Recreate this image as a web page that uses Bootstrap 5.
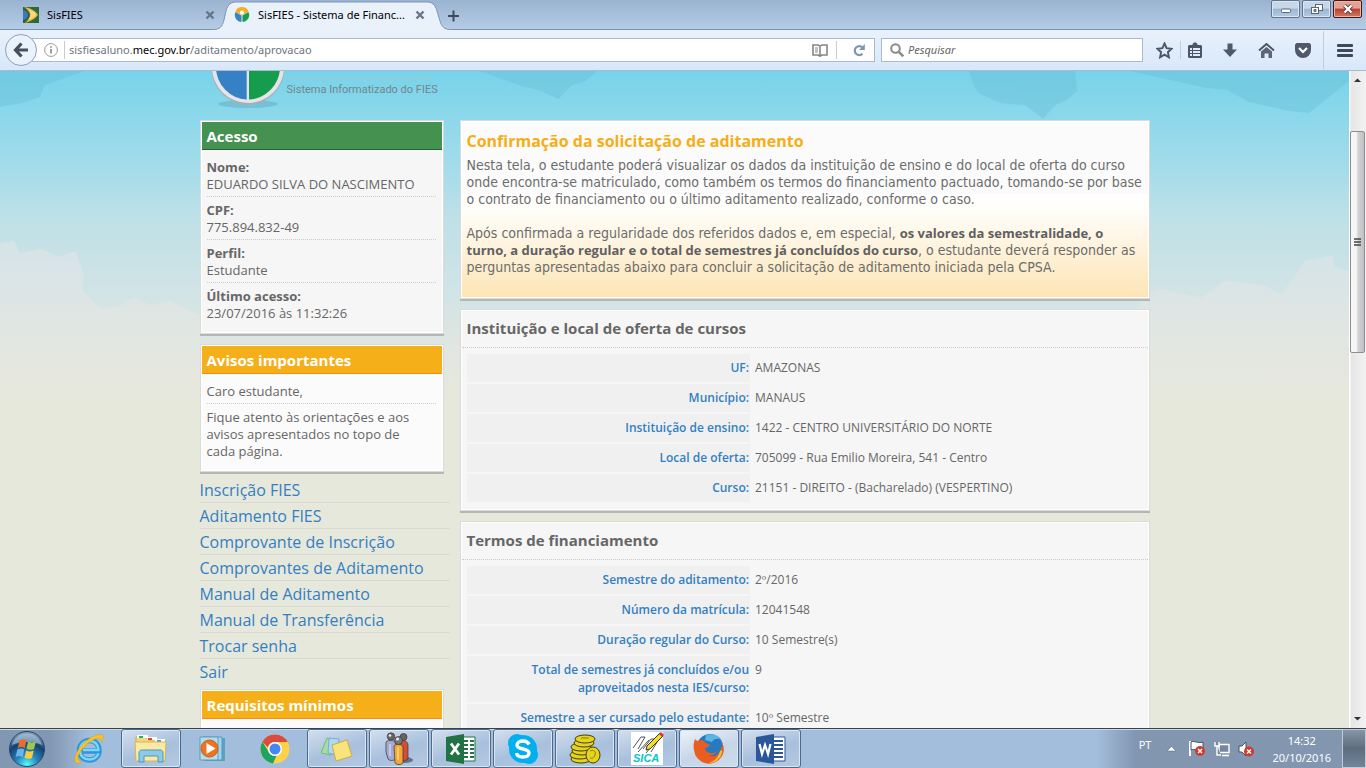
<!DOCTYPE html>
<html lang="pt-BR">
<head>
<meta charset="utf-8">
<meta name="viewport" content="width=device-width, initial-scale=1">
<title>SisFIES - Sistema de Financiamento</title>
<link href="https://cdn.jsdelivr.net/npm/bootstrap@5.3.0/dist/css/bootstrap.min.css" rel="stylesheet">
<script src="https://cdn.jsdelivr.net/npm/bootstrap@5.3.0/dist/js/bootstrap.bundle.min.js" defer></script>
<style>
body{font-family:"Open Sans","Noto Sans",sans-serif;font-size:13px;line-height:17px;color:#666;background:#e7e8dc}
button{border:0;background:none;padding:0;display:flex;align-items:center;justify-content:center}
svg{display:block;flex-shrink:0}
a{text-decoration:none}
/* browser frame */
.chrome-ui{font-family:"Noto Sans","Open Sans",sans-serif;font-size:11px;line-height:16px;color:#000}
.tabstrip{height:30px;background:linear-gradient(#9ab3d0,#b5cce6);border-bottom:1px solid #7b93b1}
.tab-item{height:30px;margin-bottom:-1px}
.tab-first{width:222px;padding:0 7px 0 23px}
.tab-active{width:218px;padding:0 15px 0 12px;position:relative}
.tab-shape{position:absolute;left:-9px;top:1px}
.tab-active>:not(.tab-shape){position:relative}
.win-controls{gap:2px}
.winbtn{width:29px;height:18px;border:1px solid #5f738c;border-radius:2px;background:linear-gradient(#c6d7ea 45%,#9db5d0 50%,#b4cae2);box-shadow:inset 0 0 0 1px #d9e6f3}
.winbtn-close{border-color:#4b1418;background:linear-gradient(#e2a296 45%,#b93d31 50%,#d27a63);box-shadow:inset 0 0 0 1px #e8b5a9}
.toolbar-ui{height:41px;padding-left:5px;background:linear-gradient(#e9f1fb,#d8e8f9);border-bottom:1px solid #a9bbd2}
.field-ui{height:24px;background:#fff;border:1px solid #a9bbd3}
.field-ui input{border:0;outline:0;background:none;font-size:11px;min-width:0}
.back-btn{width:32px;height:32px;border:1px solid #8aa0bf;border-radius:50%;background:#eaf2fb;margin-right:-5px;z-index:1}
.vline{width:1px;height:18px;background:#c6ccd4}
.vline-tall{height:38px;margin:0 13px 0 12px}
.site-info{gap:6px}
.search-ui{width:262px;margin-left:6px}
.search-ui input::placeholder{color:#666;font-style:italic}
.tool-icons{padding:0 13px 0 13px}
.tool-set{gap:20px}
.star-set{gap:7px}
/* page */
.page-area{position:relative;overflow:hidden;background:#e7e8dc}
.sky{position:absolute;inset:0 0 auto 0;width:100%;height:330px}
.page-wrap{max-width:950px;position:relative}
.logo-row{height:49px}
.logo-text{width:144px;border-top:1px solid #a5c5cc;font:11px/20px Roboto,"Liberation Sans",sans-serif;color:#74848b;white-space:nowrap}
.page-cols{gap:10px}
.col-side{width:250px;flex-shrink:0}
.panel{border:1px solid #dadcda;padding:1px;background:#f6f6f6;background-clip:padding-box;box-shadow:inset 0 0 0 1px #fff,0 2px #b5b7b2;margin-bottom:10px}
.panel-side{margin-right:6px}
.panel-light{background-color:#fbfbfb}
.panel-head{height:28px;padding:1px 5px 0;font-size:15px;font-weight:700;line-height:26px;color:#fff;background:#449150;border-bottom:1px solid #286234;margin:0}
.panel-head-warn{background:#f5af19;border-color:#f98a17}
.facts{padding:9px 6px 10px 5px;margin:0}
.facts>div+div{border-top:1px dotted #ccc;margin-top:3px;padding-top:5px}
.facts dd{margin:0}
.side-menu{margin:-5px 0 4px}
.side-menu a{display:block;height:26px;font-size:16px;line-height:27px;color:#337fc1;border-bottom:1px solid #d9dad5}
.side-menu a:last-child{border-color:transparent}
.intro{padding:8px 6px 21px 5px;background:linear-gradient(#fbfbfb 72px,#fff 72px,#fffdf8 90px,#fde5b6)}
.intro h1{font-size:16px;line-height:22px;font-weight:700;color:#f6ae17;margin:0 0 5px}
.intro p{font-family:"DejaVu Sans Condensed","Open Sans",sans-serif;font-size:14px;line-height:17px;margin:0 -6px 17px 0;color:#6c6c6c}
.intro p:last-child{margin-bottom:0}
.intro b{font-family:"Open Sans",sans-serif;font-size:13px;line-height:16px;color:#606060}
.sec-title{font-size:15px;font-weight:700;line-height:34px;height:37px;margin:0;padding:0 5px;border-bottom:1px dotted #ccc}
.data-table{width:calc(100% - 11px);margin:4px 6px 5px 5px;border-collapse:separate;border-spacing:0 2px;font-size:12px;line-height:18px}
.data-table th{width:42%;background:#f0f0f0;color:#337fc1;font-weight:600;text-align:right;padding:5px 1px 5px 20px;vertical-align:top}
.data-table td{padding:5px;vertical-align:top}
/* scrollbar */
.scroll-ui{width:17px;background:linear-gradient(90deg,#fff 1px,#e6e6e6 2px,#f2f2f2);padding:5px 1px}
.thumb-ui{width:15px;height:222px;margin-top:47px;border:1px solid #8e8e8e;border-radius:2px;background:linear-gradient(90deg,#f6f6f6 40%,#d2d2d4 55%,#bfc0c4)}
/* taskbar */
.taskbar{height:40px;border-top:1px solid #33434f;background:linear-gradient(90deg,#8297b1 50px,#a3bedd 90px,#a3bedd calc(100% - 270px),#8296b0 calc(100% - 230px));box-shadow:inset 0 1px #cbd9e8}
.task-list{gap:2px;margin-left:-3px}
.task-btn{width:60px;height:39px;border-radius:3px}
.task-open{border:1px solid #4f6a8c;box-shadow:inset 0 0 0 1px #dbe6f2;background:linear-gradient(160deg,#d3dfed,#a8c0dd 55%,#b4c9e2)}
.task-focus{background:linear-gradient(160deg,#eef3f8,#c6d6e8 55%,#cedbea)}
.tray{color:#fff;font-size:11px;line-height:17px}
.tray-clock{margin:0 11px 0 17px}
.show-desk{width:24px;height:39px;border:1px solid #c0cbd8;background:linear-gradient(#8795a6,#5d6c7e 50%,#74849a)}
</style>
</head>
<body class="vh-100 overflow-hidden d-flex flex-column">

<header class="chrome-ui flex-shrink-0">
  <div class="tabstrip d-flex">
    <div class="tab-item tab-first d-flex align-items-center">
      <svg width="16" height="16" viewBox="0 0 16 16"><rect width="16" height="16" fill="#2a6b3c"/><path d="M0 1 6 8 0 15z" fill="#1d4f86"/><path d="M0 3c4 1 5 4 5 5s-1 4-5 5z" fill="#3d7ab6"/><path d="M1 0c7 1 12 4 14 8-3 4-7 6-13 8 3-3 5-5 5-8S4 2 1 0z" fill="#eeb433"/><path d="M5 2c5 2 8 4 8 6-2 3-5 4-8 5 3-3 4-8 0-11z" fill="#fbdc84"/></svg>
      <span class="ms-2 flex-grow-1">SisFIES</span>
      <button aria-label="Fechar aba"><svg width="10" height="10" viewBox="0 0 10 10" stroke="#66758a" stroke-width="2.4"><path d="M1.500 1.500l7 7M8.500 1.500l-7 7"/></svg></button>
    </div>
    <div class="tab-item tab-active d-flex align-items-center">
      <svg class="tab-shape" width="238" height="30" viewBox="0 0 238 30"><path d="M0 28.500C7 28.500 9 26 11 19L13 10C15 3 18 1 24 1H213c6 0 9 2 11 9l3 10c2 6 4 8.500 11 8.500V30H0z" fill="#e9f1fb"/><path d="M0 28.500C7 28.500 9 26 11 19L13 10C15 3 18 1 24 1H213c6 0 9 2 11 9l3 10c2 6 4 8.500 11 8.500" fill="none" stroke="#7f97b5"/></svg>
      <svg width="16" height="16" viewBox="0 0 16 16"><circle cx="8" cy="8" r="7.500" fill="#e4e8ee"/><path d="M8 8 1.500 4.500a7 7 0 0 1 13 0z" fill="#f8ad1c"/><path d="M7.500 8.500v6.300A6.700 6.700 0 0 1 1.600 5z" fill="#3b83c6"/><path d="M8.500 8.500v6.300A6.700 6.700 0 0 0 14.400 5z" fill="#16a04c"/><circle cx="8" cy="5.500" r="2" fill="#fff"/></svg>
      <span class="flex-grow-1 ps-1 ms-1 text-nowrap">SisFIES - Sistema de Financ...</span>
      <button aria-label="Fechar aba"><svg width="10" height="10" viewBox="0 0 10 10" stroke="#66758a" stroke-width="2.4"><path d="M1.500 1.500l7 7M8.500 1.500l-7 7"/></svg></button>
    </div>
    <button class="ms-2" aria-label="Nova aba"><svg width="11" height="30" viewBox="0 0 11 30" stroke="#3f4b5a" stroke-width="2"><path d="M0 16h11M5.500 10.500v11"/></svg></button>
    <div class="win-controls ms-auto d-flex" >
      <button class="winbtn mt-0" aria-label="Minimizar"><svg width="12" height="12" viewBox="0 0 12 12"><rect x="1.500" y="6" width="9" height="3.500" rx="1" fill="#fff" stroke="#59687b"/></svg></button>
      <button class="winbtn" aria-label="Restaurar"><svg width="12" height="12" viewBox="0 0 12 12" fill="#fff" stroke="#59687b"><rect x="4.500" y="1.500" width="7" height="6"/><rect x=".5" y="4.500" width="7" height="6"/><path d="M3 6.500h2v2H3z" fill="#8fa8c4"/></svg></button>
      <button class="winbtn winbtn-close me-1" aria-label="Fechar"><svg width="12" height="10" viewBox="0 0 12 10"><path d="M2.500 1.500l7 7M9.500 1.500l-7 7" stroke="#5a3a40" stroke-width="4"/><path d="M2.500 1.500l7 7M9.500 1.500l-7 7" stroke="#fff" stroke-width="2.300"/></svg></button>
    </div>
  </div>
  <div class="toolbar-ui d-flex align-items-center">
    <button class="back-btn" aria-label="Voltar"><svg width="16" height="16" viewBox="0 0 16 16" fill="none" stroke="#454f60" stroke-width="3.200"><path d="M8.500 1.500 2.500 8l6 6.500M3 8h12"/></svg></button>
    <div class="field-ui flex-grow-1 d-flex align-items-center ps-2 border-start-0">
      <div class="site-info d-flex align-items-center ms-1 me-1">
        <svg width="14" height="14" viewBox="0 0 14 14"><circle cx="7" cy="7" r="6.400" fill="none" stroke="#999"/><path d="M6.200 6h1.600v4.500H6.200zM6.200 3.300h1.600v1.500H6.200z" fill="#888"/></svg>
        <span class="vline"></span>
      </div>
      <a class="text-nowrap text-secondary flex-grow-1" href="#">sisfiesaluno.<span class="text-black">mec.gov.br</span>/aditamento/aprovacao</a>
      <button aria-label="Modo de leitura"><svg width="16" height="13" viewBox="0 0 16 13" fill="none" stroke="#858585" stroke-width="1.600"><path d="M1 1h5l2 1 2-1h5v10h-5l-2 1.200L6 11H1zM8 2v9"/><path d="M3 4h3M3 6h3M3 8h3" stroke-width="1"/></svg></button>
      <span class="vline mx-2"></span>
      <button class="mx-2" aria-label="Recarregar"><svg width="13" height="13" viewBox="0 0 13 13"><path d="M9.500 9.800A4.500 4.500 0 1 1 9.500 3.500" fill="none" stroke="#7e95b4" stroke-width="2.200"/><path d="M11.800 0v6H6z" fill="#7e95b4"/></svg></button>
    </div>
    <label class="search-ui field-ui d-flex align-items-center ps-1">
      <svg class="ms-1" width="14" height="14" viewBox="0 0 14 14" fill="none" stroke="#8b8b8b" stroke-width="2"><circle cx="5.500" cy="5.500" r="4.300"/><path d="M8.800 8.800l4.500 4.500" stroke-width="2.600"/></svg>
      <input class="flex-grow-1 px-1" type="text" placeholder="Pesquisar" aria-label="Pesquisar">
    </label>
    <div class="tool-icons d-flex align-items-center">
      <div class="tool-set d-flex align-items-center">
        <div class="star-set d-flex align-items-center">
          <button aria-label="Favoritar"><svg width="17" height="17" viewBox="0 0 17 17"><path d="M8.500 1.500l2.100 4.700 5 .6-3.700 3.400 1 5.100-4.400-2.600-4.400 2.600 1-5.100L1.400 6.800l5-.6z" fill="none" stroke="#4a5565" stroke-width="1.900"/></svg></button>
          <span class="vline"></span>
          <button aria-label="Favoritos"><svg width="14" height="16" viewBox="0 0 14 16"><path d="M1 3h3.500V2L6 .5h2L9.500 2v1H13l1 1v11l-1 1H1l-1-1V4z" fill="#4a5565"/><path d="M2 6h2v2H2zm3 0h7v2H5zM2 9h2v2H2zm3 0h7v2H5zM2 12h2v2H2zm3 0h7v2H5z" fill="#e2ecf8"/></svg></button>
        </div>
        <button aria-label="Downloads"><svg width="16" height="15" viewBox="0 0 16 15"><path d="M5.500.5h5v6H15L8 14 1 6.500h4.500z" fill="#4f596a"/></svg></button>
        <button aria-label="Início"><svg width="17" height="15" viewBox="0 0 17 15"><path d="M1 7.500 8.500 1 16 7.500" fill="none" stroke="#4a5565" stroke-width="2"/><path d="M3 8.500 8.500 4l5.500 4.500V15h-3.500v-4.500h-4V15H3z" fill="#5b6577"/></svg></button>
        <button aria-label="Pocket"><svg width="16" height="15" viewBox="0 0 16 15"><path d="M1.500 0h13L16 1.500V7a8 8 0 0 1-16 0V1.500z" fill="#4f596a"/><path d="M4 5l4 4 4-4" fill="none" stroke="#fff" stroke-width="2.200"/></svg></button>
      </div>
      <span class="vline vline-tall"></span>
      <button aria-label="Menu"><svg width="16" height="13" viewBox="0 0 16 13" fill="#3f4957"><rect width="16" height="3" rx="1"/><rect y="5" width="16" height="3" rx="1"/><rect y="10" width="16" height="3" rx="1"/></svg></button>
    </div>
  </div>
</header>

<div class="d-flex flex-grow-1 overflow-hidden">
  <main class="page-area flex-grow-1">
    <svg class="sky" viewBox="0 0 1350 330" preserveAspectRatio="none" aria-hidden="true">
      <defs>
        <linearGradient id="skyfill" x2="0" y2="1"><stop offset="0" stop-color="#78d3ea"/><stop offset=".08" stop-color="#83d6eb"/><stop offset=".3" stop-color="#a5dcea"/><stop offset=".45" stop-color="#bfe0e7"/><stop offset=".65" stop-color="#cfe3e6"/><stop offset=".85" stop-color="#e2e6e1"/><stop offset="1" stop-color="#e7e8dc"/></linearGradient>
        <linearGradient id="cloudfill" x2="0" y2="1"><stop offset="0" stop-color="#d8e4e8"/><stop offset=".5" stop-color="#e1e6e3"/><stop offset="1" stop-color="#e7e8dc"/></linearGradient>
      </defs>
      <rect width="1350" height="330" fill="url(#skyfill)"/>
      <g fill="#66bfd6" opacity=".4">
        <path d="M0 0h85L45 14 40 26 22 32 0 36z"/><path d="M480 0h118l-12 10-15 5-12 13-18-8-22-6z"/><path d="M970 0h106l2 20-12 10-10 4-12 14-18-14-25-2-22-10-5-8z"/><path d="M1130 0h220v10l-40 32-20-2-40-9-22-12-20-2z"/>
      </g>
      <path d="M0 172l14-2 6 12 22-4 16 8 18-6 8 24-2 14 18 20 18-2 16-10 16 8 20-4 30 14v86H0z" fill="url(#cloudfill)" opacity=".85"/>
      <path d="M1140 224l22-6 40 9 24-18 40 6 16 8 14-18 10-15 28-6 1 12 15 4v130H1140z" fill="url(#cloudfill)" opacity=".85"/>
    </svg>
    <div class="page-wrap mx-auto">
      <div class="logo-row d-flex ps-2">
        <svg width="79" height="40" viewBox="0 0 79 40" aria-label="SisFIES"><ellipse cx="40" cy="33" rx="30" ry="4" fill="#6aafc2" opacity=".55"/><circle cx="40" cy="-3" r="36.500" fill="#a9adb3"/><circle cx="40" cy="-4" r="36" fill="#e3e5ea"/><path d="M38.700 28.500A32.500 32.500 0 0 1 8-3h30.700z" fill="#3681c6"/><path d="M41 28.500A32.500 32.500 0 0 0 72-3H41z" fill="#159c4d"/></svg>
        <div class="pt-2"><div class="logo-text">Sistema Informatizado do FIES</div></div>
      </div>
      <div class="page-cols d-flex">
        <aside class="col-side">
          <section class="panel panel-side">
            <h2 class="panel-head">Acesso</h2>
            <dl class="facts">
              <div><dt>Nome:</dt><dd>EDUARDO SILVA DO NASCIMENTO</dd></div>
              <div><dt>CPF:</dt><dd>775.894.832-49</dd></div>
              <div><dt>Perfil:</dt><dd>Estudante</dd></div>
              <div><dt>Último acesso:</dt><dd>23/07/2016 às 11:32:26</dd></div>
            </dl>
          </section>
          <section class="panel panel-side panel-light">
            <h2 class="panel-head panel-head-warn">Avisos importantes</h2>
            <div class="facts">
              <div>Caro estudante,</div>
              <div>Fique atento às orientações e aos<br>avisos apresentados no topo de<br>cada página.</div>
            </div>
          </section>
          <nav class="side-menu">
            <a href="#">Inscrição FIES</a><a href="#">Aditamento FIES</a><a href="#">Comprovante de Inscrição</a><a href="#">Comprovantes de Aditamento</a><a href="#">Manual de Aditamento</a><a href="#">Manual de Transferência</a><a href="#">Trocar senha</a><a href="#">Sair</a>
          </nav>
          <section class="panel panel-side panel-light">
            <h2 class="panel-head panel-head-warn">Requisitos mínimos</h2>
            <div class="facts"><div>&nbsp;</div></div>
          </section>
        </aside>
        <div class="flex-grow-1">
          <section class="panel"><div class="intro">
            <h1>Confirmação da solicitação de aditamento</h1>
            <p>Nesta tela, o estudante poderá visualizar os dados da instituição de ensino e do local de oferta do curso<br>onde encontra-se matriculado, como também os termos do financiamento pactuado, tomando-se por base<br>o contrato de financiamento ou o último aditamento realizado, conforme o caso.</p>
            <p>Após confirmada a regularidade dos referidos dados e, em especial, <b>os valores da semestralidade, o<br>turno, a duração regular e o total de semestres já concluídos do curso</b>, o estudante deverá responder as<br>perguntas apresentadas abaixo para concluir a solicitação de aditamento iniciada pela CPSA.</p>
          </div></section>
          <section class="panel">
            <h2 class="sec-title">Instituição e local de oferta de cursos</h2>
            <table class="data-table">
              <tr><th scope="row">UF:</th><td>AMAZONAS</td></tr>
              <tr><th scope="row">Município:</th><td>MANAUS</td></tr>
              <tr><th scope="row">Instituição de ensino:</th><td>1422 - CENTRO UNIVERSITÁRIO DO NORTE</td></tr>
              <tr><th scope="row">Local de oferta:</th><td>705099 - Rua Emilio Moreira, 541 - Centro</td></tr>
              <tr><th scope="row">Curso:</th><td>21151 - DIREITO - (Bacharelado) (VESPERTINO)</td></tr>
            </table>
          </section>
          <section class="panel">
            <h2 class="sec-title">Termos de financiamento</h2>
            <table class="data-table">
              <tr><th scope="row">Semestre do aditamento:</th><td>2º/2016</td></tr>
              <tr><th scope="row">Número da matrícula:</th><td>12041548</td></tr>
              <tr><th scope="row">Duração regular do Curso:</th><td>10 Semestre(s)</td></tr>
              <tr><th scope="row">Total de semestres já concluídos e/ou<br>aproveitados nesta IES/curso:</th><td>9</td></tr>
              <tr><th scope="row">Semestre a ser cursado pelo estudante:</th><td>10º Semestre</td></tr>
            </table>
          </section>
        </div>
      </div>
    </div>
  </main>
  <div class="scroll-ui flex-shrink-0 d-flex flex-column align-items-center" aria-hidden="true">
    <svg width="7" height="8" viewBox="0 0 7 8"><path d="M0 6h7L3.500 2.500z" fill="#333"/></svg>
    <div class="thumb-ui d-flex align-items-center justify-content-center"><svg width="7" height="9" viewBox="0 0 7 9"><path d="M0 1h7M0 4h7M0 7h7" stroke="#444" stroke-width="1.500"/></svg></div>
    <svg class="mt-auto" width="7" height="8" viewBox="0 0 7 8"><path d="M0 2h7L3.500 5.500z" fill="#333"/></svg>
  </div>
</div>

<footer class="taskbar chrome-ui d-flex align-items-center flex-shrink-0">
  <div class="task-list d-flex">
    <button class="task-btn" aria-label="Iniciar"><svg width="38" height="38" viewBox="0 0 38 38"><defs><radialGradient id="orbfill" cx=".5" cy=".95" r=".9"><stop offset="0" stop-color="#5ff"/><stop offset=".35" stop-color="#2585bd"/><stop offset=".7" stop-color="#15426f"/><stop offset="1" stop-color="#7d9bb9"/></radialGradient></defs><circle cx="19" cy="19" r="17.500" fill="url(#orbfill)" stroke="#26466a"/><path d="M4 15a15.500 15.500 0 0 1 30 0c-8-4-22-4-30 0z" fill="#c3d6e8" opacity=".55"/><path d="M11.500 10.500c3-1.500 5-1.200 7 0l-1.700 7.500c-2.500-1.400-4.500-1.400-7 0z" fill="#ee6a2c"/><path d="M20 11.500c3 1.500 5 1.300 8 0l-2 7.500c-3 1.300-5 1-7.500-.3z" fill="#9bc853"/><path d="M9.300 19.500c3-1.300 5-1.200 7 0L14.700 27c-2.500-1.400-4.500-1.400-7 0z" fill="#69b5ea"/><path d="M18 20.500c3 1.400 5 1.300 7.700 0L24 28c-3 1.300-5 1-7.500-.3z" fill="#fccb41"/></svg></button>
    <button class="task-btn" aria-label="Internet Explorer"><svg width="32" height="32" viewBox="0 0 32 32"><path d="M26 20.500C24 25 20.500 27 16.500 27 10.500 27 6.500 23 6.500 17.500S10.700 7.500 16.500 7.500c6 0 9.500 4 9.500 10.500H9.500" fill="none" stroke="#2a97dd" stroke-width="5.500"/><path d="M25.500 20.500C23.500 25 20.500 26.500 16.500 26.500 11 26.500 7 23 7 17.500S11 8 16.500 8c5 0 8.500 3 9 9H10" fill="none" stroke="#80d4f8" stroke-width="2.500"/><path d="M6 30.500C-2 30 3 17 12 9 20 2 30-1 30 4c.2 2-.7 4-1.500 5.500C28.500 2 19 6 12 13 5 20 2 28 8 28z" fill="#f8c325" stroke="#d89d12" stroke-width=".5"/></svg></button>
    <button class="task-btn task-open" aria-label="Windows Explorer"><svg width="34" height="30" viewBox="0 0 34 30"><path d="M2 3h10l2 3h17v20H2z" fill="#f5d879" stroke="#c9a648"/><path d="M3 1h11v3H3zM13 3h10v3H13zM21 5h10v3H21z" fill="#fff"/><path d="M5 2h4v2H5z" fill="#27b35a"/><path d="M14 4h4v2h-4z" fill="#df4a36"/><path d="M23 6h4v2h-4z" fill="#4698de"/><path d="M1 8h31l-1 19H2z" fill="#fbe9a5" stroke="#d4b65d"/><path d="M5 28V19c0-2 1-3 3-3h18c2 0 3 1 3 3v9h-5v-6H10v6z" fill="#8ccbe6" stroke="#4b98bd"/></svg></button>
    <button class="task-btn" aria-label="Windows Media Player"><svg width="28" height="26" viewBox="0 0 28 26"><path d="M6 2h20v23H6z" fill="#58a2c6"/><path d="M4 1h19v23H4z" fill="#a5d4ea" stroke="#5698ba"/><path d="M1 1h18v23H1z" fill="#b8dbec" stroke="#5c9dbf"/><circle cx="10.500" cy="12.500" r="8.500" fill="#ee7322" stroke="#c85e18"/><path d="M7.500 7v11l9-5.500z" fill="#fff"/></svg></button>
    <button class="task-btn" aria-label="Google Chrome"><svg width="30" height="30" viewBox="0 0 30 30"><circle cx="15" cy="15" r="14.500" fill="#fdd249"/><path d="M2.400 7.800A14.500 14.500 0 0 1 27.800 8H15c-4 0-6.500 2.500-7 5.500z" fill="#dc4b3e"/><path d="M2.400 7.800 9 18.500c1.500 2.500 4 3.500 7.500 3.300L13 29.400A14.500 14.500 0 0 1 2.400 7.800z" fill="#1da462"/><circle cx="15" cy="15" r="7" fill="#fff"/><circle cx="15" cy="15" r="5.500" fill="#4688f1"/></svg></button>
    <button class="task-btn task-open" aria-label="Notas autoadesivas"><svg width="32" height="28" viewBox="0 0 32 28"><path d="M6 3 12 5 10 20 0 18z" fill="#a7dda1" stroke="#75b880"/><path d="M8 3 18 4 17 20 7 18z" fill="#aed9f3" stroke="#7aacd0"/><path d="M11 10 26 5l5 16-16 5z" fill="#f8e37c" stroke="#cfac3c"/></svg></button>
    <button class="task-btn task-open" aria-label="Usuários"><svg width="28" height="34" viewBox="0 0 28 34"><ellipse cx="20" cy="28" rx="8" ry="3" fill="#61718a"/><g stroke="#333" stroke-width=".7"><path d="M14 9c4-2 9 0 9 4v14c-3 2-6 3-9 1z" fill="#d34e37"/><circle cx="18.500" cy="5" r="3.500" fill="#666"/><path d="M1 10c3-3 9-2 10 2v15c-3 2-6 2-8 0L1 20z" fill="#a3aacf"/><circle cx="6" cy="4.500" r="3.700" fill="#666"/><path d="M9 14c3-3 9-2 9 2v15c-2 2-6 2-8 0z" fill="#f4a832"/><circle cx="13.500" cy="8.500" r="4" fill="#777"/></g><circle cx="12.500" cy="7" r="1.500" fill="#eee"/><circle cx="5" cy="3.500" r="1.300" fill="#eee"/><path d="M13 15v13M5 12v12" stroke="#fff" stroke-width="1.500" opacity=".5"/></svg></button>
    <button class="task-btn task-open" aria-label="Excel"><svg width="32" height="32" viewBox="0 0 32 32"><path d="M16 4h14v24H16z" fill="#fff" stroke="#217346"/><path d="M19 8h4m2 0h4M19 12h4m2 0h4M19 16h4m2 0h4M19 20h4m2 0h4M19 24h4m2 0h4" stroke="#217346" stroke-width="2"/><path d="M1 4 19 1v30L1 28z" fill="#217346"/><path d="M6 10.500l8 11M14 10.500l-8 11" stroke="#fff" stroke-width="2.800"/></svg></button>
    <button class="task-btn task-open" aria-label="Skype"><svg width="32" height="32" viewBox="0 0 32 32"><circle cx="10" cy="10" r="9" fill="#00aff0"/><circle cx="22" cy="22" r="9" fill="#00aff0"/><circle cx="16" cy="16" r="14" fill="#00aff0"/><path d="M22 11.500C21 9 18.500 8 16 8c-3.500 0-6 1.500-6 4 0 5.500 12 2.500 12 8 0 3-3 4-6 4s-6-1-6.500-4" fill="none" stroke="#fff" stroke-width="3.400"/></svg></button>
    <button class="task-btn task-open" aria-label="Moedas"><svg width="32" height="30" viewBox="0 0 32 30" fill="#e5d41c" stroke="#463d02"><ellipse cx="12" cy="25" rx="10" ry="4"/><ellipse cx="11" cy="21" rx="10" ry="4"/><ellipse cx="13" cy="17" rx="10" ry="4"/><ellipse cx="12" cy="13" rx="10" ry="4"/><ellipse cx="15" cy="9" rx="10" ry="4"/><ellipse cx="16" cy="5" rx="10" ry="4"/><ellipse cx="24" cy="21" rx="7" ry="8"/><path d="M21 17c4-2 6 1 5 4s-3 4-5 3M12 4h8" fill="none" stroke="#8b7b07"/></svg></button>
    <button class="task-btn task-open" aria-label="SICA"><svg width="34" height="34" viewBox="0 0 34 34"><path d="M1 0h32v33H1z" fill="#fff"/><path d="M3 16 11 5h4L8 17M13 17l8-10h8l-8 13" fill="none" stroke="#555"/><path d="M8 20 19 8M16 21l9-11" stroke="#555"/><path d="M17 14 30 1l3 3-13 13-4 1z" fill="#f5dd20" stroke="#333"/><path d="M29 2l2-2 3 3-2 2z" fill="#d33"/><text x="3" y="30" font-family="Liberation Sans" font-size="11" font-weight="700" font-style="italic" fill="#06c5d2">SICA</text></svg></button>
    <button class="task-btn task-open task-focus" aria-label="Firefox"><svg width="32" height="32" viewBox="0 0 32 32"><circle cx="17" cy="14" r="13" fill="#2879bd"/><path d="M13 2c6-2 12 0 15 4-4-1-8 0-9 3l-7-2z" fill="#5ab4e4"/><path d="M2 6c1 1 2 2 3 2 2-1 4-1 6 0 1 2 4 3 6 4-1 2-4 2-5 4 1 4 7 6 12 2-2 4-5 5-8 4 6 4 13-2 12-9 1 1 1 2 1 3 1-3 0-6-1-8 3 4 4 10 1 15A15 15 0 0 1 1 17C0 13 1 9 2 6z" fill="#ea5c1f"/><path d="M29 16c1 8-6 14-13 14 6-2 10-7 11-12 1 0 2-1 2-2z" fill="#fbbd32"/></svg></button>
    <button class="task-btn task-open" aria-label="Word"><svg width="32" height="32" viewBox="0 0 32 32"><path d="M16 4h14v24H16z" fill="#fff" stroke="#2b579a"/><path d="M19 8h9M19 12h9M19 16h9M19 20h9M19 24h9" stroke="#2b579a" stroke-width="1.800"/><path d="M1 4 19 1v30L1 28z" fill="#2b579a"/><path d="M4.500 11l2.500 10 3-9 3 9 2.500-10" fill="none" stroke="#fff" stroke-width="2.200"/></svg></button>
  </div>
  <div class="tray ms-auto d-flex align-items-center">
    <span class="pb-2">PT</span>
    <svg class="ms-3 me-2" width="9" height="6" viewBox="0 0 9 6"><path d="M0 5h9L4.500.5z" fill="#fff" stroke="#55677f" stroke-width=".5"/></svg>
    <svg class="ms-1" width="18" height="17" viewBox="0 0 18 17"><path d="M2 1v15" stroke="#fff" stroke-width="2"/><path d="M3 2c4-2 6 2 12 0v8c-5 2-8-2-12 0z" fill="#fff" stroke="#44536a"/><circle cx="12" cy="11" r="5" fill="#d2392c"/><path d="M10 9l4 4m0-4-4 4" stroke="#fff" stroke-width="1.500"/></svg>
    <svg class="ms-2" width="16" height="16" viewBox="0 0 16 16" fill="#75879e" stroke="#fff" stroke-width="1.400"><path d="M5 3.500h10v8H5zM8 14.500h7"/><path d="M1 1v4h4V1M3 5v9h4"/></svg>
    <svg class="ms-2" width="17" height="16" viewBox="0 0 17 16"><path d="M1 5h3l4-4v14l-4-4H1z" fill="#fff" stroke="#44536a"/><circle cx="11" cy="10.500" r="5" fill="#d2392c"/><path d="M9 8.500l4 4m0-4-4 4" stroke="#fff" stroke-width="1.500"/></svg>
    <div class="tray-clock text-center"><div>14:32</div><div>20/10/2016</div></div>
    <button class="show-desk" aria-label="Mostrar área de trabalho"></button>
  </div>
</footer>
</body>
</html>
